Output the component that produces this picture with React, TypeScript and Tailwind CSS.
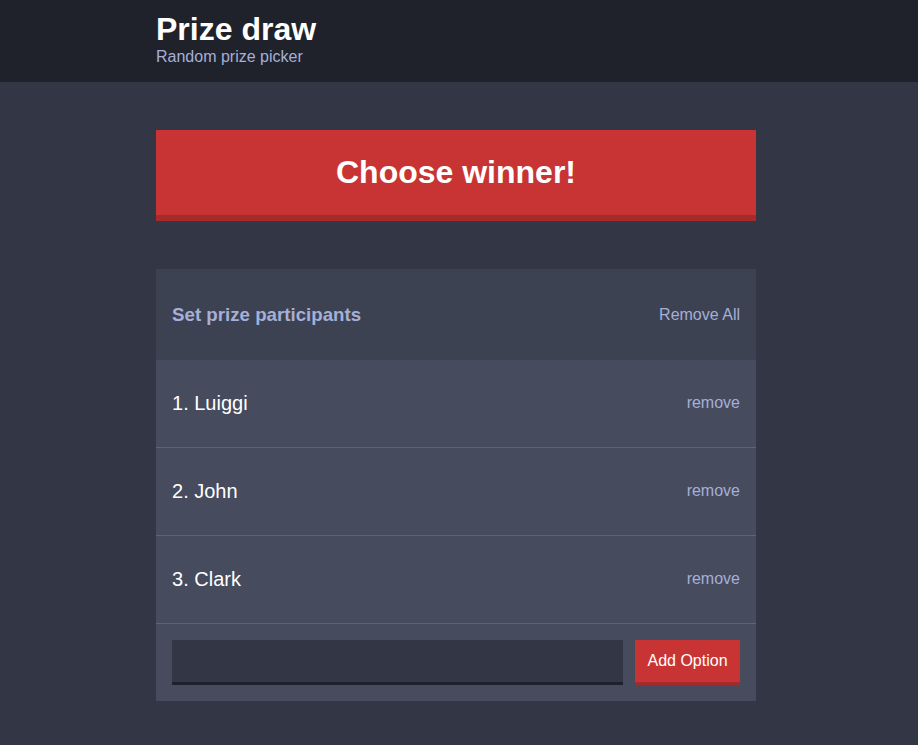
import React from "react";

const items = ["Luiggi", "John", "Clark"];

export default function App() {
  return (
    <div
      className="min-h-screen bg-[#333745] text-white"
      style={{ fontFamily: '"Liberation Sans", Arial, sans-serif' }}
    >
      <header className="bg-[#20222b] pt-[11px] pb-4 pr-[6px]">
        <div className="mx-auto w-[600px]">
          <h1 className="m-0 text-[32px] font-bold leading-[37px] text-white">Prize draw</h1>
          <p className="m-0 text-[16px] leading-[18px] text-[#a5afd7]">Random prize picker</p>
        </div>
      </header>
      <div className="pr-[6px]">
        <main className="mx-auto w-[600px] pt-12">
          <button className="block w-full bg-[#c83434] border-b-[6px] border-[#a62a2a] py-6 text-[32px] font-bold leading-[37px] text-white">
            Choose winner!
          </button>
          <section className="mt-12 bg-[#464b5e]">
            <div className="flex items-center justify-between bg-[#3c4251] px-4 pt-[1px] h-[91px]">
              <h3 className="m-0 text-[18.72px] font-bold text-[#a5afd7]">Set prize participants</h3>
              <button className="text-[16px] text-[#a5afd7]">Remove All</button>
            </div>
            {items.map((name, i) => (
              <div
                key={name}
                className="flex h-[88px] items-center justify-between border-b border-[#5c6278] px-4 pb-[1px]"
              >
                <p className="m-0 text-[20px] text-white">
                  {i + 1}. {name}
                </p>
                <button className="text-[16px] text-[#a5afd7]">remove</button>
              </div>
            ))}
            <form className="flex p-4" onSubmit={(e) => e.preventDefault()}>
              <input
                className="mr-3 h-[45px] min-w-0 flex-1 border-b-[3px] border-[#20222b] bg-[#333745] px-2 text-[#a5afd7] outline-none"
                type="text"
              />
              <button className="h-[45px] w-[105px] shrink-0 bg-[#c83434] border-b-[3px] border-[#a62a2a] text-[16px] text-white">
                Add Option
              </button>
            </form>
          </section>
        </main>
      </div>
    </div>
  );
}
